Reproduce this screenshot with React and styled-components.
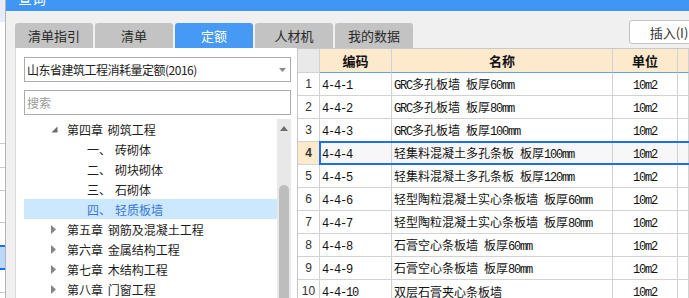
import React from 'react';
import styled, { createGlobalStyle } from 'styled-components';

const GlobalStyle = createGlobalStyle`
	html, body {
		margin: 0;
		padding: 0;
		background: #ffffff;
		overflow: hidden;
	}
	body {
		font-family: "Noto Sans CJK SC", "Liberation Sans", sans-serif;
		color: #222222;
	}
	* {
		box-sizing: border-box;
	}
`;

const Screen = styled.div`
	display: flex;
	width: 689px;
	height: 298px;
	overflow: hidden;
`;

/* the app window behind the dialog */
const BackStrip = styled.div`
	width: 6px;
	flex: none;
	display: flex;
	flex-direction: column;
	border-right: 1px solid #b4b4b4;
	background: #ffffff;
`;

const StripBand = styled.div`
	flex: ${p => (p.$h ? 'none' : '1')};
	height: ${p => (p.$h ? `${p.$h}px` : 'auto')};
	background: ${p => p.$bg || '#ffffff'};
	border-top: ${p => (p.$top ? `2px solid ${p.$top}` : 'none')};
	border-bottom: ${p => (p.$line ? `${p.$lineW || 1}px solid ${p.$line}` : 'none')};
`;

const Dialog = styled.div`
	flex: 1;
	min-width: 0;
	display: flex;
	flex-direction: column;
	background: #f0f0f0;
`;

const TitleBar = styled.div`
	height: 11px;
	flex: none;
	background: #3f96f5;
	overflow: hidden;
	padding-left: 12px;
`;

const TitleText = styled.div`
	margin-top: -9px;
	font-size: 14px;
	line-height: 14px;
	color: #ffffff;
`;

const Toolbar = styled.div`
	height: 37px;
	flex: none;
	display: flex;
	align-items: flex-end;
	padding-left: 9px;
`;

const TabRow = styled.div`
	display: flex;
	gap: 2px;
`;

const Tab = styled.div`
	width: 78px;
	height: 25px;
	border-radius: 3px 3px 0 0;
	display: flex;
	align-items: center;
	justify-content: center;
	font-size: 13px;
	background: ${p => (p.$active ? '#4699f4' : '#c3c3c3')};
	color: ${p => (p.$active ? '#ffffff' : '#2a2a2a')};
`;

const InsertButton = styled.div`
	align-self: flex-start;
	margin: 9px -20px 0 auto;
	width: 80px;
	height: 24px;
	flex: none;
	border: 1px solid #c2c2c2;
	border-radius: 3px;
	background: #ffffff;
	display: flex;
	align-items: center;
	justify-content: center;
	font-size: 13px;
	color: #333333;
`;

const Body = styled.div`
	flex: 1;
	min-height: 0;
	display: flex;
`;

const LeftPanel = styled.div`
	width: 282px;
	flex: none;
	margin-left: 9px;
	border-left: 1px solid #dadada;
	background: #ffffff;
	display: flex;
	flex-direction: column;
	padding: 9px 6px 0 8px;
`;

const Field = styled.div`
	height: 25px;
	flex: none;
	border: 1px solid #ababab;
	display: flex;
	align-items: center;
	padding: 0 4px 0 2px;
	font-size: 12px;
	letter-spacing: ${p => (p.$tight ? '-0.5px' : '0')};
	color: ${p => (p.$placeholder ? '#9a9a9a' : '#222222')};
	margin-top: ${p => p.$gap || 0}px;
`;

const FieldText = styled.span`
	flex: 1;
`;

const TreeArea = styled.div`
	flex: 1;
	min-height: 0;
	margin-top: 4px;
	display: flex;
`;

const TreeList = styled.div`
	flex: 1;
	display: flex;
	flex-direction: column;
`;

const TreeRow = styled.div`
	height: 20px;
	flex: none;
	display: flex;
	align-items: center;
	padding-left: ${p => (p.$level ? 63 : 27)}px;
	font-size: 12px;
	word-spacing: 2px;
	background: ${p => (p.$selected ? '#cce8ff' : 'transparent')};
	color: ${p => (p.$selected ? '#3b78d6' : '#1e1e1e')};
`;

const Toggle = styled.span`
	width: 16px;
	flex: none;
	display: flex;
	align-items: center;
`;

const TreeNum = styled.span`
	width: 28px;
	flex: none;
`;

const ScrollTrack = styled.div`
	width: 14px;
	flex: none;
	background: #e8e8e8;
	display: flex;
	flex-direction: column;
	align-items: center;
`;

const ScrollArrow = styled.div`
	height: 18px;
	flex: none;
	display: flex;
	align-items: center;
	justify-content: center;
`;

const ScrollThumb = styled.div`
	width: 10px;
	flex: 1;
	margin-top: 48px;
	border-radius: 5px 5px 0 0;
	background: #bdbdbd;
`;

const Grid = styled.div`
	flex: 1;
	min-width: 0;
	background: #ffffff;
	border-left: 1px solid #c8c8c8;
	border-top: 1px solid #c8c8c8;
	display: flex;
	flex-direction: column;
`;

const Row = styled.div`
	display: flex;
	flex: none;
	position: relative;

	&::after {
		content: '';
		display: ${p => (p.$selected ? 'block' : 'none')};
		position: absolute;
		left: 21px;
		right: -10px;
		top: -1px;
		bottom: 0;
		border: 2px solid #1d6ee8;
		pointer-events: none;
	}
`;

const Cell = styled.div`
	width: ${p => (p.$w ? `${p.$w}px` : 'auto')};
	flex: ${p => (p.$w ? 'none' : '1')};
	height: ${p => (p.$head ? 24 : 23)}px;
	border-right: 1px solid #d2d2d2;
	border-bottom: 1px solid ${p => (p.$head ? '#5ea3f2' : '#d2d2d2')};
	display: flex;
	align-items: center;
	justify-content: ${p => (p.$center ? 'center' : 'flex-start')};
	padding-left: ${p => (p.$center ? 0 : 2)}px;
	font-size: ${p => (p.$head ? 13 : 12)}px;
	white-space: pre;
	overflow: hidden;
	color: #111111;
	background: ${p => (p.$head ? '#fde9cb' : p.$selected ? '#f7f7f7' : '#ffffff')};
	font-weight: ${p => (p.$head ? 700 : 400)};
`;

const NumCell = styled.div`
	width: 22px;
	flex: none;
	height: ${p => (p.$head ? 24 : 23)}px;
	border-right: 1px solid #d2d2d2;
	border-bottom: 1px solid #d2d2d2;
	display: flex;
	align-items: center;
	justify-content: center;
	font-family: "Liberation Sans", Arial, sans-serif;
	font-size: 12px;
	color: #333333;
	background: ${p => (p.$head ? '#e9e9e9' : p.$selected ? '#fde9cb' : '#ffffff')};
	font-weight: ${p => (p.$selected ? 700 : 400)};
`;

const CellText = styled.span`
	white-space: pre;
`;

const Latin = styled.span`
	font-family: "Liberation Mono", monospace;
	font-size: 12px;
	letter-spacing: -1.2px;
`;

const Mixed = ({ text }) => (
	<CellText>
		{text
			.split(/([\x20-\x7e]+)/)
			.filter(Boolean)
			.map((part, i) =>
				/^[\x20-\x7e]+$/.test(part) ? <Latin key={i}>{part}</Latin> : <span key={i}>{part}</span>
			)}
	</CellText>
);

const tabs = ['清单指引', '清单', '定额', '人材机', '我的数据'];

const tree = [
	{ text: '第四章 砌筑工程', open: true },
	{ level: 1, num: '一、', text: '砖砌体' },
	{ level: 1, num: '二、', text: '砌块砌体' },
	{ level: 1, num: '三、', text: '石砌体' },
	{ level: 1, num: '四、', text: '轻质板墙', selected: true },
	{ text: '第五章 钢筋及混凝土工程' },
	{ text: '第六章 金属结构工程' },
	{ text: '第七章 木结构工程' },
	{ text: '第八章 门窗工程' },
];

const rows = [
	['4-4-1', 'GRC多孔板墙 板厚60mm'],
	['4-4-2', 'GRC多孔板墙 板厚80mm'],
	['4-4-3', 'GRC多孔板墙 板厚100mm'],
	['4-4-4', '轻集料混凝土多孔条板 板厚100mm'],
	['4-4-5', '轻集料混凝土多孔条板 板厚120mm'],
	['4-4-6', '轻型陶粒混凝土实心条板墙 板厚60mm'],
	['4-4-7', '轻型陶粒混凝土实心条板墙 板厚80mm'],
	['4-4-8', '石膏空心条板墙 板厚60mm'],
	['4-4-9', '石膏空心条板墙 板厚80mm'],
	['4-4-10', '双层石膏夹心条板墙'],
];

const SELECTED = 3;

const ToggleIcon = ({ open }) =>
	open ? (
		<svg width="7" height="7" viewBox="0 0 7 7">
			<path d="M6.5 0.5 L6.5 6.5 L0.5 6.5 Z" fill="#6a6a6a" />
		</svg>
	) : (
		<svg width="5" height="9" viewBox="0 0 5 9">
			<path d="M0 0 L5 4.5 L0 9 Z" fill="#858585" />
		</svg>
	);

const App = () => {
	return (
		<>
			<GlobalStyle />
			<Screen>
				<BackStrip>
					<StripBand $h={22} $bg="#e4edf8" />
					<StripBand $h={122} $line="#c8c8c8" />
					<StripBand $h={24} $line="#c8c8c8" />
					<StripBand $h={23} $line="#c8c8c8" />
					<StripBand $h={32} $line="#c8c8c8" />
					<StripBand $h={22} />
					<StripBand $h={25} $bg="#b9d8fb" $top="#1d6ee8" $line="#1d6ee8" $lineW={2} />
					<StripBand $h={23} $line="#c8c8c8" />
					<StripBand />
				</BackStrip>
				<Dialog>
					<TitleBar>
						<TitleText>查询</TitleText>
					</TitleBar>
					<Toolbar>
						<TabRow>
							{tabs.map(t => (
								<Tab key={t} $active={t === '定额'}>
									{t}
								</Tab>
							))}
						</TabRow>
						<InsertButton>插入(I)</InsertButton>
					</Toolbar>
					<Body>
						<LeftPanel>
							<Field $tight>
								<FieldText>山东省建筑工程消耗量定额(2016)</FieldText>
								<svg width="7" height="4" viewBox="0 0 7 4">
									<path d="M0 0 L7 0 L3.5 4 Z" fill="#8a8a8a" />
								</svg>
							</Field>
							<Field $gap={8} $placeholder>
								搜索
							</Field>
							<TreeArea>
								<TreeList>
									{tree.map(node => (
										<TreeRow key={node.text} $level={node.level} $selected={node.selected}>
											{node.level ? (
												<TreeNum>{node.num}</TreeNum>
											) : (
												<Toggle>
													<ToggleIcon open={node.open} />
												</Toggle>
											)}
											<span>{node.text}</span>
										</TreeRow>
									))}
								</TreeList>
								<ScrollTrack>
									<ScrollArrow>
										<svg width="8" height="5" viewBox="0 0 8 5">
											<path d="M0 5 L4 0 L8 5 Z" fill="#6e6e6e" />
										</svg>
									</ScrollArrow>
									<ScrollThumb />
								</ScrollTrack>
							</TreeArea>
						</LeftPanel>
						<Grid>
							<Row>
								<NumCell $head />
								<Cell $head $w={72} $center>编码</Cell>
								<Cell $head $w={221} $center>名称</Cell>
								<Cell $head $w={65} $center>单位</Cell>
								<Cell $head />
							</Row>
							{rows.map(([code, name], i) => {
								const sel = i === SELECTED;
								return (
									<Row key={code} $selected={sel}>
										<NumCell $selected={sel}>{i + 1}</NumCell>
										<Cell $w={72} $selected={sel}>
											<Mixed text={code} />
										</Cell>
										<Cell $w={221} $selected={sel}>
											<Mixed text={name} />
										</Cell>
										<Cell $w={65} $center $selected={sel}>
											<Mixed text="10m2" />
										</Cell>
										<Cell $selected={sel} />
									</Row>
								);
							})}
						</Grid>
					</Body>
				</Dialog>
			</Screen>
		</>
	);
};

export default App;
